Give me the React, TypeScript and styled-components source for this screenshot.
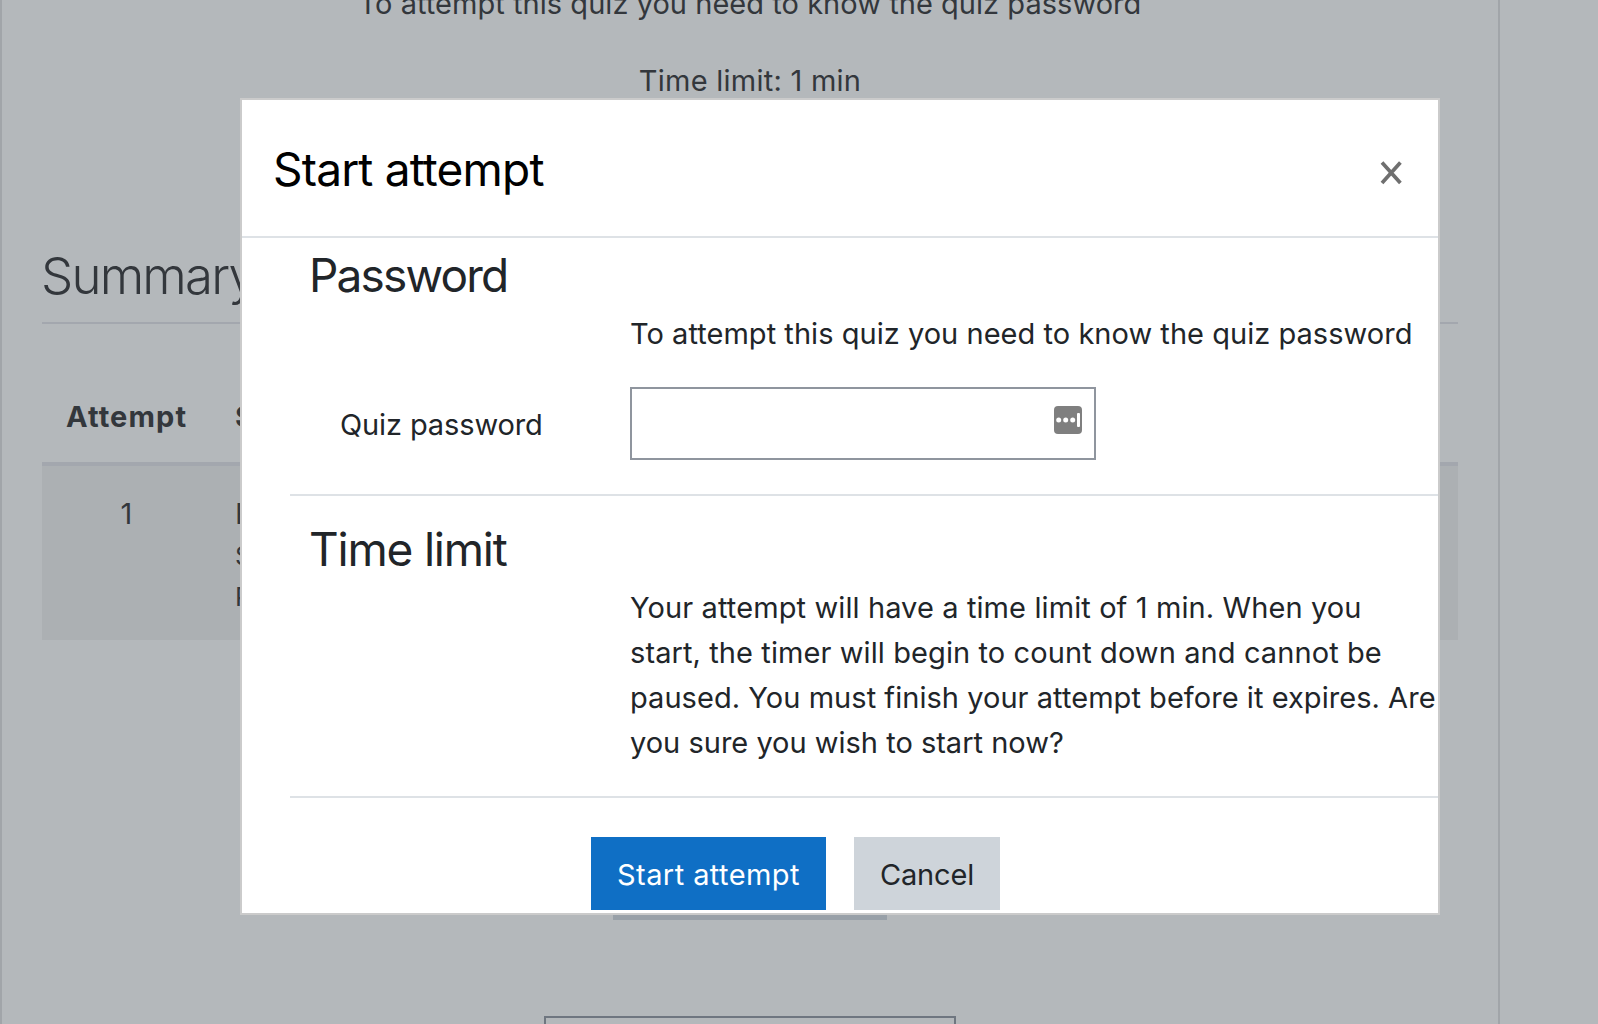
import React from "react";
import styled, { createGlobalStyle } from "styled-components";

const GlobalStyle = createGlobalStyle`
  body {
    margin: 0;
    background-color: #b4b8bb;
    font-family: Inter, "Liberation Sans", sans-serif;
    font-size: 29px;
    line-height: 45px;
    overflow: hidden;
  }
  * {
    box-sizing: border-box;
  }
`;

const Page = styled.main`
  width: 1500px;
  height: 1024px;
  overflow: hidden;
  padding: 0 40px;
  border-left: 2px solid #a1a5a9;
  border-right: 2px solid #a1a5a9;
  color: #33373c;
  display: flex;
  flex-direction: column;

  > * {
    flex-shrink: 0;
  }
`;

const Info = styled.p<{ $spacing: number }>`
  margin: 0 0 32px;
  text-align: center;
  white-space: nowrap;
  letter-spacing: ${(p) => p.$spacing}px;
  &:first-child {
    margin-top: -19px;
  }
`;

const SummaryTitle = styled.h3`
  height: 78px;
  margin: 111px 0 0;
  border-bottom: 2px solid #a3a7ae;
  font-size: 51px;
  font-weight: 340;
  line-height: 60px;
  letter-spacing: -1.8px;
  text-indent: -1px;
  white-space: nowrap;
`;

const Attempts = styled.table`
  width: 100%;
  margin-top: 46px;
  border-spacing: 0;
  table-layout: fixed;
`;

const HeadCell = styled.th<{ $width?: number }>`
  width: ${(p) => (p.$width ? `${p.$width}px` : "auto")};
  height: 96px;
  padding: 24px 24px 23px;
  border-bottom: 4px solid #a3a7ae;
  text-align: left;
  vertical-align: top;
  white-space: nowrap;
  letter-spacing: 1.1px;
`;

const Cell = styled.td<{ $center?: boolean }>`
  height: 174px;
  padding: 25px 24px 0;
  background-color: #acb0b3;
  text-align: ${(p) => (p.$center ? "center" : "left")};
  vertical-align: top;
`;

const StateDetails = styled.span`
  display: block;
  font-size: 26px;
  line-height: 40.5px;
`;

const PageButton = styled.div`
  width: 274px;
  height: 73px;
  margin: 207px auto 0;
  background-color: #98a0a8;
`;

const JumpTo = styled.div`
  width: 412px;
  height: 73px;
  margin: 96px auto 0;
  border: 2px solid #6f7680;
`;

const Overlay = styled.div`
  position: fixed;
  inset: 0;
  padding: 98px 0 0 240px;
`;

const Dialog = styled.section`
  width: 1200px;
  height: 817px;
  overflow: hidden;
  border: 2px solid #cbcbcb;
  background-color: #fff;
  color: #212529;
`;

const DialogHeader = styled.header`
  display: flex;
  justify-content: space-between;
  height: 138px;
  padding: 41px 36px 0 31px;
  border-bottom: 2px solid #dee2e6;
`;

const DialogTitle = styled.h2`
  margin: 0;
  color: #000;
  font-size: 46px;
  font-weight: 400;
  line-height: 56px;
  letter-spacing: -0.82px;
`;

const CloseButton = styled.button`
  display: flex;
  width: 22px;
  height: 24px;
  margin-top: 20px;
  padding: 0;
  border: 0;
  background: none;
`;

const Section = styled.div<{ $top: number; $height: number }>`
  height: ${(p) => p.$height}px;
  margin-left: 48px;
  padding: ${(p) => p.$top}px 0 0 20px;
  border-bottom: 2px solid #dee2e6;
`;

const SectionTitle = styled.h3<{ $spacing: number }>`
  margin: 0 0 8px -1px;
  font-size: 46px;
  font-weight: 400;
  line-height: 56px;
  letter-spacing: ${(p) => p.$spacing}px;
`;

const FormRow = styled.div`
  display: grid;
  grid-template-columns: 320px 1fr;
  white-space: nowrap;
`;

const Label = styled.label`
  padding: 15px 0 0 30px;
  letter-spacing: -0.12px;
`;

const TextLine = styled.div<{ $spacing: number }>`
  letter-spacing: ${(p) => p.$spacing}px;
`;

const PasswordField = styled.div`
  display: flex;
  justify-content: flex-end;
  width: 466px;
  height: 73px;
  padding: 17px 12px;
  border: 2px solid #8f959e;
`;

const Spacer = styled.div`
  height: 31px;
`;

const Actions = styled.div`
  display: flex;
  gap: 28px;
  padding: 39px 0 0 349px;
`;

const Button = styled.button<{ $primary?: boolean }>`
  width: ${(p) => (p.$primary ? 235 : 146)}px;
  height: 73px;
  padding: 1px 0 0;
  border: 0;
  background-color: ${(p) => (p.$primary ? "#0f6fc5" : "#ced4da")};
  color: ${(p) => (p.$primary ? "#fff" : "#212529")};
  font: inherit;
  letter-spacing: ${(p) => (p.$primary ? 0.42 : -0.15)}px;
  white-space: nowrap;
`;

const paragraph = [
  { text: "Your attempt will have a time limit of 1 min. When you", spacing: 0.105 },
  { text: "start, the timer will begin to count down and cannot be", spacing: 0.095 },
  { text: "paused. You must finish your attempt before it expires. Are", spacing: 0.045 },
  { text: "you sure you wish to start now?", spacing: 0 },
];

const PasswordIcon = () => (
  <svg width="28" height="28" viewBox="0 0 28 28">
    <rect width="28" height="28" rx="4" fill="#7f7f7f" />
    <g fill="#fff">
      <circle cx="4.7" cy="14" r="2.5" />
      <circle cx="11.7" cy="14" r="2.5" />
      <circle cx="18.7" cy="14" r="2.5" />
      <rect x="23" y="7" width="3" height="14" rx="1" />
    </g>
  </svg>
);

const App: React.FC = () => (
  <>
    <GlobalStyle />
    <Page>
      <Info $spacing={0.04}>To attempt this quiz you need to know the quiz password</Info>
      <Info $spacing={0.25}>Time limit: 1 min</Info>
      <SummaryTitle>Summary</SummaryTitle>
      <Attempts>
        <thead>
          <tr>
            <HeadCell $width={169}>Attempt</HeadCell>
            <HeadCell>State</HeadCell>
          </tr>
        </thead>
        <tbody>
          <tr>
            <Cell $center>1</Cell>
            <Cell>
              Finished
              <StateDetails>Submitted</StateDetails>
              <StateDetails>PM</StateDetails>
            </Cell>
          </tr>
        </tbody>
      </Attempts>
      <PageButton />
      <JumpTo />
    </Page>

    <Overlay>
      <Dialog role="dialog">
        <DialogHeader>
          <DialogTitle>Start attempt</DialogTitle>
          <CloseButton aria-label="Close">
            <svg width="22" height="24" viewBox="0 0 22 24">
              <path d="M2 1.5 20.4 22M20.4 1.5 2 22" stroke="#6f6f6f" strokeWidth="3.7" />
            </svg>
          </CloseButton>
        </DialogHeader>

        <Section $top={9} $height={258}>
          <SectionTitle $spacing={-1.8}>Password</SectionTitle>
          <FormRow>
            <span />
            <TextLine $spacing={0.035}>
              To attempt this quiz you need to know the quiz password
            </TextLine>
          </FormRow>
          <Spacer />
          <FormRow>
            <Label>Quiz password</Label>
            <PasswordField>
              <PasswordIcon />
            </PasswordField>
          </FormRow>
        </Section>

        <Section $top={25} $height={302}>
          <SectionTitle $spacing={-1.2}>Time limit</SectionTitle>
          <FormRow>
            <span />
            <div>
              {paragraph.map((line) => (
                <TextLine $spacing={line.spacing} key={line.text}>
                  {line.text}
                </TextLine>
              ))}
            </div>
          </FormRow>
        </Section>

        <Actions>
          <Button $primary>Start attempt</Button>
          <Button>Cancel</Button>
        </Actions>
      </Dialog>
    </Overlay>
  </>
);

export default App;
